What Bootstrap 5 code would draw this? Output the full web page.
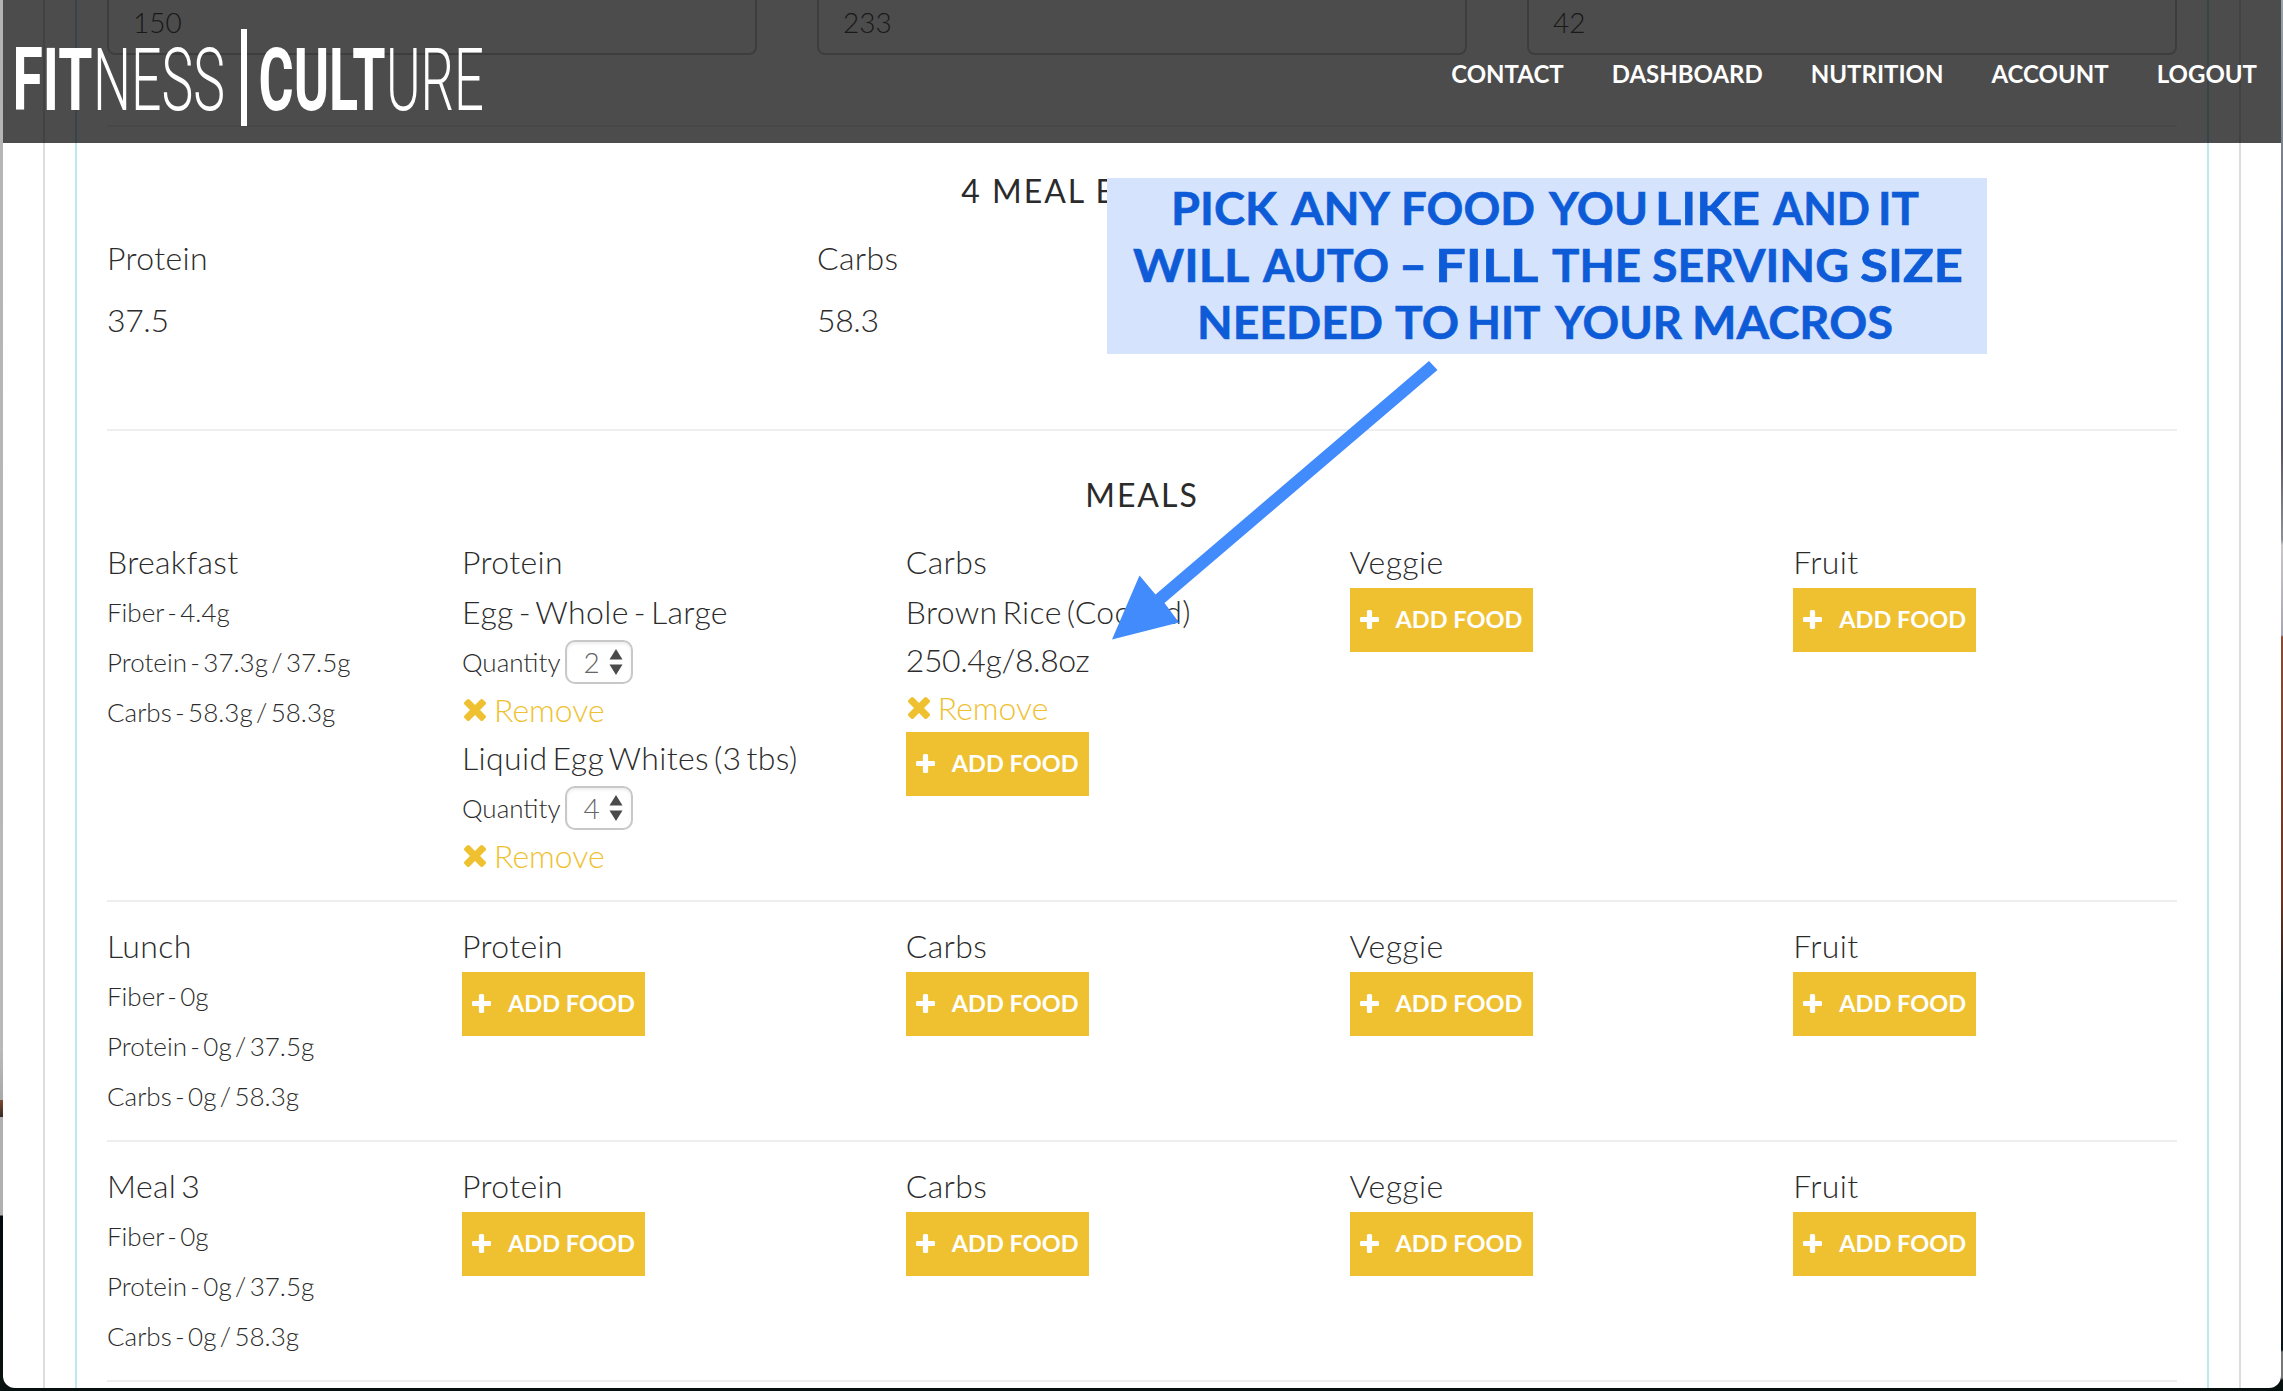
<!DOCTYPE html>
<html lang="en">
<head>
<meta charset="utf-8">
<title>Fitness Culture - Nutrition</title>
<link href="https://cdn.jsdelivr.net/npm/bootstrap@5.3.0/dist/css/bootstrap.min.css" rel="stylesheet">
<style>
  body { font-family: Lato, "Open Sans", sans-serif; font-weight: 300; font-size: 32px; line-height: 48px; color: #2b2b2b; background: #07100f; height: 1391px; overflow: hidden; }
  .desktop { height: 1391px; padding: 0 2px 0 3px;
    background:
      linear-gradient(#9aa3ab 0, #707a88 200px, #4d5f7d 340px, #5c5763 450px, #8d9197 540px, #c9c6c8 545px, #a9a6b4 635px, #8c4a34 637px, #6b3424 900px, #101c22 1000px, #0b161b 1350px, #777 1352px, #777 1378px, #07100f 1380px) right / 2px 100% no-repeat,
      linear-gradient(#b4b4b4 0, #b9b9b9 1050px, #a9a9a9 1100px, #7c4a30 1100px, #3a2a28 1117px, #b0b0b0 1117px, #b0b0b0 1215px, #04090d 1216px, #0a1210 100%) left / 3px 100% no-repeat,
      #06100e; }
  .browser-win { height: 1388px; background: #fff; border-radius: 0 0 12px 12px; }
  .topbar { height: 143px; background: rgba(0,0,0,.7); z-index: 10; padding: 0 24px 0 0; }
  .topbar .nav-link { font-size: 24px; font-weight: 700; color: #fff; line-height: 36px; padding: 0; }
  .menu-list { gap: 48px; margin-top: 4px; }
  .outer-panel { margin: 0 40px; padding: 0 30px; border: solid #ddd; border-width: 0 2px; }
  .inner-panel { padding: 0 30px; border: solid #bce8f1; border-width: 0 2px; }
  .wide-row { --bs-gutter-x: 60px; }
  .macro-input { height: 55px; border: 2px solid #ccc; border-top: 0; border-radius: 0 0 8px 8px; padding: 0 24px; font-size: 28px; line-height: 45px; color: #555; font-weight: 300; background: #fff; }
  .rule { border-top: 2px solid #eee; }
  .sect-title { font-size: 32px; font-weight: 400; letter-spacing: 2px; line-height: 48px; height: 47px; text-align: center; margin: 0; }
  .col-title { height: 50px; }
  .col-title, .food-name { letter-spacing: .35px; word-spacing: -4px; white-space: nowrap; }
  .num-val { letter-spacing: -.4px; }
  .macro-line { font-size: 26px; line-height: 48px; height: 50px; word-spacing: -3.7px; white-space: nowrap; }
  .meal-row { padding: 20px 0 18px; border-bottom: 2px solid #eee; }
  .qty-line { height: 50px; font-size: 26px; padding-top: 2px; }
  .qty-select { width: 68px; height: 44px; border: 2px solid #c8c8c8; border-radius: 10px; padding: 0 8px 0 16px; margin-left: 5px; font-size: 28px; line-height: 38px; color: #666; box-shadow: inset 0 2px 3px rgba(0,0,0,.07); }
  .remove-link { color: #efc131; text-decoration: none; height: 48px; padding-left: 2px; }
  .remove-link:hover { color: #d9ac1f; }
  .remove-link svg { margin-right: 8px; }
  .btn-food { background: #efc131; color: #fff; border: 0; border-radius: 0; width: 183px; height: 64px; padding: 0 0 2px 10px; font-size: 23.5px; font-weight: 700; line-height: 36px; }
  .btn-food svg { margin-right: 17px; }
  .note-layer { left: 0; top: 0; z-index: 20; }
</style>
</head>
<body>
<svg class="d-none">
  <symbol id="i-plus" viewBox="192 128 1408 1408"><path fill="currentColor" d="M1600 736v192q0 40-28 68t-68 28h-416v416q0 40-28 68t-68 28h-192q-40 0-68-28t-28-68v-416h-416q-40 0-68-28t-28-68v-192q0-40 28-68t68-28h416v-416q0-40 28-68t68-28h192q40 0 68 28t28 68v416h416q40 0 68 28t28 68z"/></symbol>
  <symbol id="i-times" viewBox="302 238 1188 1188"><path fill="currentColor" transform="translate(0 -128)" d="M1490 1322q0 40-28 68l-136 136q-28 28-68 28t-68-28l-294-294-294 294q-28 28-68 28t-68-28l-136-136q-28-28-28-68t28-68l294-294-294-294q-28-28-28-68t28-68l136-136q28-28 68-28t68 28l294 294 294-294q28-28 68-28t68 28l136 136q28 28 28 68t-28 68l-294 294 294 294q28 28 28 68z"/></symbol>
  <symbol id="i-sort" viewBox="0 0 14 26"><path fill="#4a4a4a" d="M7 0l6.5 10.500h-13zM7 26l6.500-10.500h-13z"/></symbol>
</svg>
<div class="desktop position-relative">
  <div class="browser-win position-relative overflow-hidden">
    <nav class="topbar position-absolute top-0 start-0 w-100 d-flex align-items-center justify-content-between">
      <svg width="500" height="143" viewBox="3 0 500 143" fill="#fff" font-family="Roboto, sans-serif" font-size="88">
        <text x="12.500" y="110" font-weight="700" textLength="80" lengthAdjust="spacingAndGlyphs">FIT</text>
        <text x="93" y="110" font-weight="300" textLength="132" lengthAdjust="spacingAndGlyphs">NESS</text>
        <rect x="241" y="29" width="6" height="97"/>
        <text x="258.500" y="110" font-weight="700" textLength="127" lengthAdjust="spacingAndGlyphs">CULT</text>
        <text x="386" y="110" font-weight="300" textLength="98" lengthAdjust="spacingAndGlyphs">URE</text>
      </svg>
      <div class="menu-list d-flex">
        <a class="nav-link" href="#">CONTACT</a>
        <a class="nav-link" href="#">DASHBOARD</a>
        <a class="nav-link" href="#">NUTRITION</a>
        <a class="nav-link" href="#">ACCOUNT</a>
        <a class="nav-link" href="#">LOGOUT</a>
      </div>
    </nav>

    <main class="outer-panel">
      <div class="inner-panel">
        <div class="row wide-row">
          <div class="col-4"><div class="macro-input">150</div></div>
          <div class="col-4"><div class="macro-input">233</div></div>
          <div class="col-4"><div class="macro-input">42</div></div>
        </div>
        <div class="rule" style="margin-top:70px"></div>
        <h2 class="sect-title" style="margin-top:40px">4 MEAL BREAKDOWN</h2>
        <div class="row wide-row" style="margin-top:20px">
          <div class="col-4"><div class="food-name">Protein</div><div class="num-val" style="margin-top:14px">37.5</div></div>
          <div class="col-4"><div class="food-name">Carbs</div><div class="num-val" style="margin-top:14px">58.3</div></div>
        </div>
        <div class="rule" style="margin-top:85px"></div>
        <h2 class="sect-title" style="margin-top:40px">MEALS</h2>

        <div class="meal-row">
          <div class="row wide-row" style="min-height:344px">
            <div class="col-2">
              <div class="col-title">Breakfast</div>
              <div class="macro-line">Fiber - 4.4g</div>
              <div class="macro-line">Protein - 37.3g / 37.5g</div>
              <div class="macro-line">Carbs - 58.3g / 58.3g</div>
            </div>
            <div class="col-10"><div class="row wide-row">
              <div class="col-3">
                <div class="col-title">Protein</div>
                <div class="food-name">Egg - Whole - Large</div>
                <div class="qty-line d-flex align-items-center">Quantity <span class="qty-select d-flex align-items-center justify-content-between">2<svg width="14" height="26"><use href="#i-sort"/></svg></span></div>
                <a class="remove-link d-flex align-items-center" href="#"><svg width="22" height="22"><use href="#i-times"/></svg>Remove</a>
                <div class="food-name">Liquid Egg Whites (3 tbs)</div>
                <div class="qty-line d-flex align-items-center">Quantity <span class="qty-select d-flex align-items-center justify-content-between">4<svg width="14" height="26"><use href="#i-sort"/></svg></span></div>
                <a class="remove-link d-flex align-items-center" href="#"><svg width="22" height="22"><use href="#i-times"/></svg>Remove</a>
              </div>
              <div class="col-3">
                <div class="col-title">Carbs</div>
                <div class="food-name">Brown Rice (Cooked)</div>
                <div class="num-val">250.4g/8.8oz</div>
                <a class="remove-link d-flex align-items-center" href="#"><svg width="22" height="22"><use href="#i-times"/></svg>Remove</a>
                <button class="btn btn-food d-flex align-items-center"><svg width="19" height="19"><use href="#i-plus"/></svg>ADD FOOD</button>
              </div>
              <div class="col-3"><div class="col-title">Veggie</div><button class="btn btn-food d-flex align-items-center"><svg width="19" height="19"><use href="#i-plus"/></svg>ADD FOOD</button></div>
              <div class="col-3"><div class="col-title">Fruit</div><button class="btn btn-food d-flex align-items-center"><svg width="19" height="19"><use href="#i-plus"/></svg>ADD FOOD</button></div>
            </div></div>
          </div>
        </div>

        <div class="meal-row">
          <div class="row wide-row">
            <div class="col-2">
              <div class="col-title">Lunch</div>
              <div class="macro-line">Fiber - 0g</div>
              <div class="macro-line">Protein - 0g / 37.5g</div>
              <div class="macro-line">Carbs - 0g / 58.3g</div>
            </div>
            <div class="col-10"><div class="row wide-row">
              <div class="col-3"><div class="col-title">Protein</div><button class="btn btn-food d-flex align-items-center"><svg width="19" height="19"><use href="#i-plus"/></svg>ADD FOOD</button></div>
              <div class="col-3"><div class="col-title">Carbs</div><button class="btn btn-food d-flex align-items-center"><svg width="19" height="19"><use href="#i-plus"/></svg>ADD FOOD</button></div>
              <div class="col-3"><div class="col-title">Veggie</div><button class="btn btn-food d-flex align-items-center"><svg width="19" height="19"><use href="#i-plus"/></svg>ADD FOOD</button></div>
              <div class="col-3"><div class="col-title">Fruit</div><button class="btn btn-food d-flex align-items-center"><svg width="19" height="19"><use href="#i-plus"/></svg>ADD FOOD</button></div>
            </div></div>
          </div>
        </div>

        <div class="meal-row">
          <div class="row wide-row">
            <div class="col-2">
              <div class="col-title">Meal 3</div>
              <div class="macro-line">Fiber - 0g</div>
              <div class="macro-line">Protein - 0g / 37.5g</div>
              <div class="macro-line">Carbs - 0g / 58.3g</div>
            </div>
            <div class="col-10"><div class="row wide-row">
              <div class="col-3"><div class="col-title">Protein</div><button class="btn btn-food d-flex align-items-center"><svg width="19" height="19"><use href="#i-plus"/></svg>ADD FOOD</button></div>
              <div class="col-3"><div class="col-title">Carbs</div><button class="btn btn-food d-flex align-items-center"><svg width="19" height="19"><use href="#i-plus"/></svg>ADD FOOD</button></div>
              <div class="col-3"><div class="col-title">Veggie</div><button class="btn btn-food d-flex align-items-center"><svg width="19" height="19"><use href="#i-plus"/></svg>ADD FOOD</button></div>
              <div class="col-3"><div class="col-title">Fruit</div><button class="btn btn-food d-flex align-items-center"><svg width="19" height="19"><use href="#i-plus"/></svg>ADD FOOD</button></div>
            </div></div>
          </div>
        </div>
        <div style="height:20px"></div>
      </div>
    </main>
  </div>

  <!-- instruction callout and arrow -->
  <svg class="note-layer position-absolute" width="2283" height="700" viewBox="0 0 2283 700">
    <rect x="1107" y="178" width="880" height="176" fill="#d6e3fd"/>
    <g fill="#0d5bd7" stroke="#0d5bd7" stroke-width=".6" font-family="Lato, sans-serif" font-weight="700" font-size="46">
      <text y="225"><tspan x="1171" textLength="106" lengthAdjust="spacingAndGlyphs">PICK</tspan> <tspan x="1291" textLength="97" lengthAdjust="spacingAndGlyphs">ANY</tspan> <tspan x="1401" textLength="134" lengthAdjust="spacingAndGlyphs">FOOD</tspan> <tspan x="1549" textLength="99" lengthAdjust="spacingAndGlyphs">YOU</tspan> <tspan x="1655" textLength="105" lengthAdjust="spacingAndGlyphs">LIKE</tspan> <tspan x="1773" textLength="97" lengthAdjust="spacingAndGlyphs">AND</tspan> <tspan x="1878" textLength="41" lengthAdjust="spacingAndGlyphs">IT</tspan></text>
      <text y="282"><tspan x="1133" textLength="115" lengthAdjust="spacingAndGlyphs">WILL</tspan> <tspan x="1263" textLength="126" lengthAdjust="spacingAndGlyphs">AUTO</tspan> <tspan x="1399" textLength="28" font-weight="900" lengthAdjust="spacingAndGlyphs">–</tspan> <tspan x="1435" textLength="102" lengthAdjust="spacingAndGlyphs">FILL</tspan> <tspan x="1552" textLength="89" lengthAdjust="spacingAndGlyphs">THE</tspan> <tspan x="1652" textLength="197" lengthAdjust="spacingAndGlyphs">SERVING</tspan> <tspan x="1860" textLength="103" lengthAdjust="spacingAndGlyphs">SIZE</tspan></text>
      <text y="339"><tspan x="1197" textLength="186" lengthAdjust="spacingAndGlyphs">NEEDED</tspan> <tspan x="1395" textLength="64" lengthAdjust="spacingAndGlyphs">TO</tspan> <tspan x="1467" textLength="72" lengthAdjust="spacingAndGlyphs">HIT</tspan> <tspan x="1555" textLength="127" lengthAdjust="spacingAndGlyphs">YOUR</tspan> <tspan x="1692" textLength="201" lengthAdjust="spacingAndGlyphs">MACROS</tspan></text>
    </g>
    <path fill="#418bfc" d="M1429 361L1437.500 370L1164.500 603L1179 622.500L1112 639.500L1139.500 575.500L1155.500 594.500Z"/>
  </svg>
</div>
<script src="https://cdn.jsdelivr.net/npm/bootstrap@5.3.0/dist/js/bootstrap.bundle.min.js"></script>
</body>
</html>
